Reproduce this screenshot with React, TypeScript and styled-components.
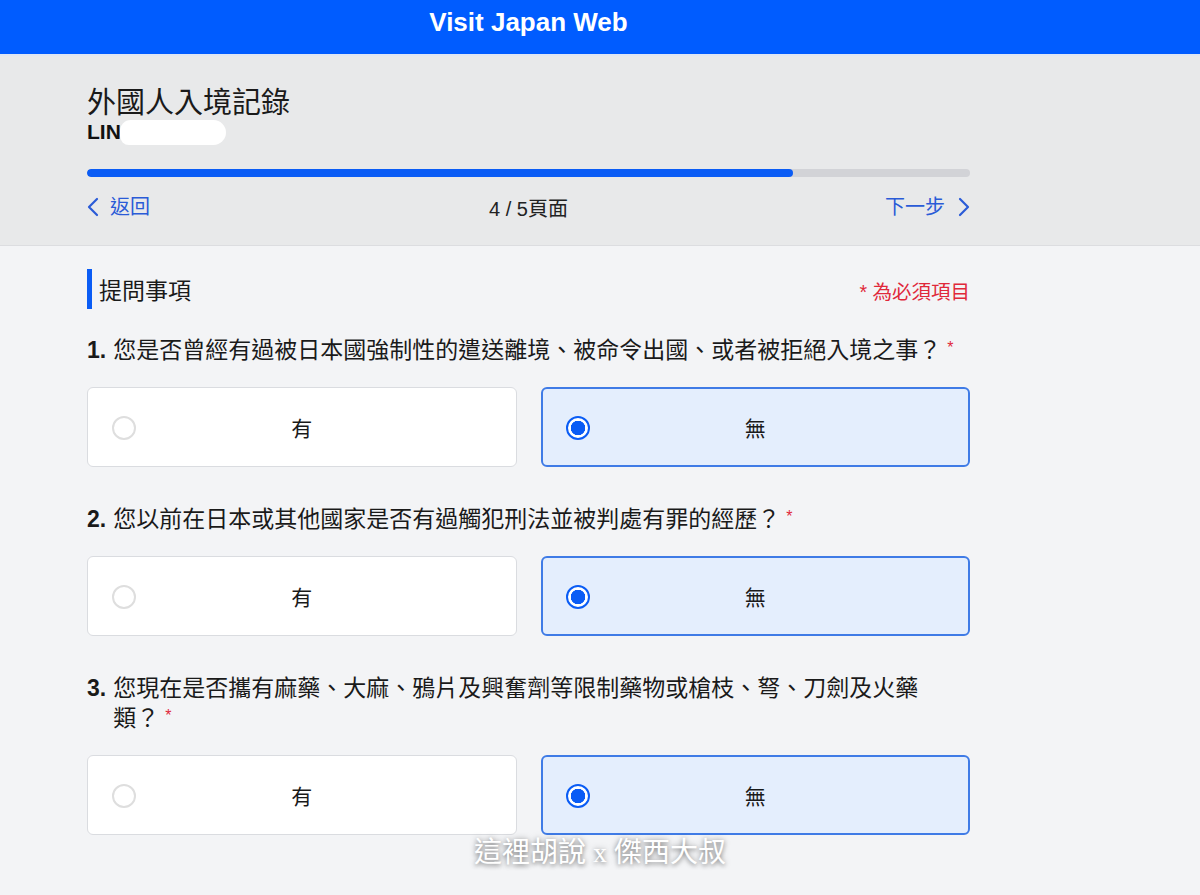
import styled, { createGlobalStyle } from 'styled-components'

const GlobalStyle = createGlobalStyle`
    * {
        box-sizing: border-box;
    }
    body {
        margin: 0;
        background: #f3f4f6;
        font-family: 'Liberation Sans', 'Noto Sans CJK TC', sans-serif;
        color: #1f1f1f;
    }
`

interface Question {
    no: number
    text: string
    answer: 'yes' | 'no'
}

const questions: Question[] = [
    { no: 1, text: '您是否曾經有過被日本國強制性的遣送離境、被命令出國、或者被拒絕入境之事？', answer: 'no' },
    { no: 2, text: '您以前在日本或其他國家是否有過觸犯刑法並被判處有罪的經歷？', answer: 'no' },
    { no: 3, text: '您現在是否攜有麻藥、大麻、鴉片及興奮劑等限制藥物或槍枝、弩、刀劍及火藥類？', answer: 'no' },
]

const ChevronLeft = () => (
    <svg width="12" height="20" viewBox="0 0 12 20" fill="none">
        <path d="M10 2 L2 10 L10 18" stroke="#2a5bd7" strokeWidth="2.2" strokeLinecap="round" strokeLinejoin="round" />
    </svg>
)

const ChevronRight = () => (
    <svg width="12" height="20" viewBox="0 0 12 20" fill="none">
        <path d="M2 2 L10 10 L2 18" stroke="#2a5bd7" strokeWidth="2.2" strokeLinecap="round" strokeLinejoin="round" />
    </svg>
)

const Option = ({ label, checked }: { label: string; checked: boolean }) => (
    <OptionBox checked={checked}>
        <Radio checked={checked} />
        <OptionLabel>{label}</OptionLabel>
    </OptionBox>
)

const App = () => {
    return (
        <Page>
            <GlobalStyle />
            <Header>
                <Column>
                    <HeaderTitle>Visit Japan Web</HeaderTitle>
                </Column>
            </Header>
            <Band>
                <Column>
                    <PageTitle>外國人入境記錄</PageTitle>
                    <Name>
                        LIN<Redacted />
                    </Name>
                    <Progress>
                        <ProgressFill style={{ width: '80%' }} />
                    </Progress>
                    <Nav>
                        <NavLink>
                            <ChevronLeft />
                            返回
                        </NavLink>
                        <PageCount>4 / 5頁面</PageCount>
                        <NavLink right>
                            下一步
                            <ChevronRight />
                        </NavLink>
                    </Nav>
                </Column>
            </Band>
            <Main>
                <Column>
                    <SectionHead>
                        <SectionTitle>提問事項</SectionTitle>
                        <Required>* 為必須項目</Required>
                    </SectionHead>
                    {questions.map((q) => (
                        <QuestionBlock key={q.no}>
                            <QuestionText>
                                <QNo>{q.no}.</QNo>
                                <QBody>{q.text}</QBody>
                            </QuestionText>
                            <Options>
                                <Option label="有" checked={q.answer === 'yes'} />
                                <Option label="無" checked={q.answer === 'no'} />
                            </Options>
                        </QuestionBlock>
                    ))}
                </Column>
            </Main>
            <Watermark>這裡胡說 x 傑西大叔</Watermark>
        </Page>
    )
}

export default App

const Page = styled.div`
    position: relative;
    min-height: 895px;
    background: #f3f4f6;
`

const Column = styled.div`
    width: 883px;
    margin-left: 87px;
`

const Header = styled.header`
    height: 56px;
    background: #005cff;
    border-bottom: 2px solid #dfe6f3;
`

const HeaderTitle = styled.h1`
    margin: 0;
    padding-top: 6px;
    text-align: center;
    color: #fff;
    font-size: 26px;
    line-height: 32px;
    font-weight: 700;
    font-family: 'Liberation Sans', Arial, sans-serif;
`

const Band = styled.section`
    background: #e8e9ea;
    padding: 31px 0 24px;
    border-bottom: 1px solid #dcdde0;
`

const PageTitle = styled.h2`
    margin: 0;
    font-size: 29px;
    line-height: 32px;
    font-weight: 400;
    color: #1a1a1a;
`

const Name = styled.div`
    display: flex;
    align-items: center;
    font-size: 21px;
    line-height: 26px;
    font-weight: 700;
    color: #111;
`

const Redacted = styled.span`
    display: inline-block;
    width: 106px;
    height: 25px;
    margin-left: -1px;
    background: #fff;
    border-radius: 12px 14px 14px 10px;
`

const Progress = styled.div`
    margin-top: 24px;
    height: 8px;
    border-radius: 4px;
    background: #d2d3d7;
    overflow: hidden;
`

const ProgressFill = styled.div`
    height: 100%;
    background: #0a5cf5;
    border-radius: 4px;
`

const Nav = styled.div`
    margin-top: 16px;
    display: grid;
    grid-template-columns: 1fr auto 1fr;
    align-items: center;
`

const NavLink = styled.a<{ right?: boolean }>`
    display: flex;
    align-items: center;
    gap: ${(props) => (props.right ? '13px' : '11px')};
    justify-self: ${(props) => (props.right ? 'end' : 'start')};
    color: #2a5bd7;
    font-size: 20px;
    line-height: 24px;
    cursor: pointer;
`

const PageCount = styled.div`
    font-size: 20px;
    line-height: 24px;
    color: #222;
    padding-top: 4px;
`

const Main = styled.main`
    padding: 23px 0 40px;
`

const SectionHead = styled.div`
    display: flex;
    align-items: center;
    justify-content: space-between;
    height: 40px;
    margin-bottom: 26px;
`

const SectionTitle = styled.h3`
    margin: 0;
    height: 40px;
    display: flex;
    align-items: center;
    padding-left: 7px;
    border-left: 5px solid #0a5cf5;
    font-size: 23px;
    font-weight: 400;
    color: #1a1a1a;
`

const Required = styled.span`
    font-size: 19.5px;
    color: #e0283a;
    padding-top: 2px;
`

const QuestionBlock = styled.div`
    margin-bottom: 37px;
`

const QuestionText = styled.div`
    display: flex;
    gap: 7px;
    font-size: 23px;
    line-height: 30px;
    color: #1a1a1a;
    padding-right: 16px;
    margin-bottom: 22px;
`

const QNo = styled.span`
    font-weight: 700;
    flex-shrink: 0;
`

const QBody = styled.div`
    &::after {
        content: '*';
        color: #e0283a;
        font-size: 16px;
        line-height: 1;
        margin-left: 6px;
        vertical-align: 5px;
    }
`

const Options = styled.div`
    display: grid;
    grid-template-columns: 1fr 1fr;
    gap: 24px;
`

const OptionBox = styled.label<{ checked: boolean }>`
    display: grid;
    grid-template-columns: 1fr auto 1fr;
    align-items: center;
    height: 80px;
    padding: 0 24px;
    border-radius: 6px;
    background: ${(props) => (props.checked ? '#e4eefd' : '#fff')};
    border: ${(props) => (props.checked ? '2px solid #3f7be6' : '1px solid #dadce0')};
    cursor: pointer;
`

const Radio = styled.span<{ checked: boolean }>`
    justify-self: start;
    width: 24px;
    height: 24px;
    border-radius: 50%;
    border: 2px solid ${(props) => (props.checked ? '#0a5cf5' : '#dedede')};
    background: ${(props) => (props.checked ? 'radial-gradient(circle, #0a5cf5 0 7px, #fff 7.5px)' : '#fff')};
    margin-left: ${(props) => (props.checked ? '-1px' : '0')};
    margin-top: 2px;
`

const OptionLabel = styled.span`
    font-size: 21px;
    color: #1a1a1a;
`

const Watermark = styled.div`
    position: absolute;
    left: 50%;
    top: 833px;
    transform: translateX(-50%);
    color: #fff;
    font-family: 'Liberation Serif', 'Noto Sans CJK TC', serif;
    font-size: 28px;
    line-height: 40px;
    font-weight: 400;
    white-space: nowrap;
    text-shadow: 0 0 6px rgba(0, 0, 0, 0.35), 0 2px 4px rgba(0, 0, 0, 0.3);
`
